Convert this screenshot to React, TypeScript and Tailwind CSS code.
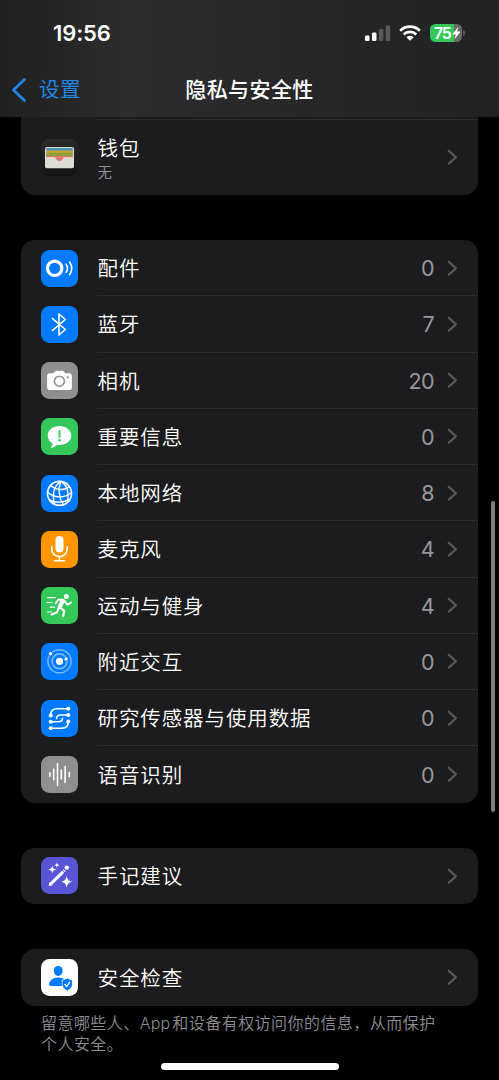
import React from "react"

const FONT = "font-['Inter','Noto_Sans_CJK_SC',sans-serif]"

const AccessoryIcon = () => (
    <svg viewBox="0 0 37 37" className="w-full h-full" fill="none" stroke="#fff" strokeLinecap="round">
        <circle cx="13.700" cy="18.300" r="7.200" strokeWidth="3.200" />
        <path d="M25 14.200a7 7 0 0 1 0 8.200" strokeWidth="1.600" />
        <path d="M28.600 12a11 11 0 0 1 0 12.600" strokeWidth="1.600" />
    </svg>
)

const BluetoothIcon = () => (
    <svg viewBox="0 0 37 37" className="w-full h-full" fill="none" stroke="#fff" strokeWidth="1.600" strokeLinecap="round" strokeLinejoin="round">
        <path d="M11.600 12.600 24.300 23.500 18 29V8l6.300 5.500L11.600 24.400" />
    </svg>
)

const CameraIcon = () => (
    <svg viewBox="0 0 37 37" className="w-full h-full">
        <path fill="#fff" d="M9 11.300h3.400l1.500-1.900c.4-.5.8-.7 1.500-.7h5.900c.7 0 1.100.2 1.500.7l1.500 1.900H28a2.900 2.900 0 0 1 2.900 2.900v11A2.900 2.900 0 0 1 28 28H9a2.900 2.900 0 0 1-2.900-2.800v-11A2.900 2.900 0 0 1 9 11.300Z" />
        <circle cx="18.400" cy="19.200" r="5" fill="none" stroke="#8e8e93" strokeWidth="1.600" />
        <circle cx="26.700" cy="15.300" r="1.100" fill="#8e8e93" />
    </svg>
)

const CriticalIcon = () => (
    <svg viewBox="0 0 37 37" className="w-full h-full">
        <path fill="#fff" d="M18.500 8C25 8 30.300 12.200 30.300 17.500S25 27 18.600 27c-1 0-1.700-.1-2.500-.3-1.400 1.500-3.700 2.900-5.600 3-.6 0-.7-.5-.4-.8.9-.9 1.500-2 1.500-3.300C8.800 23.800 6.700 21 6.700 17.500 6.700 12.200 12 8 18.500 8Z" />
        <path d="M18.500 12.900v6" stroke="#34c759" strokeWidth="1.900" strokeLinecap="round" />
        <circle cx="18.500" cy="22.300" r="1.200" fill="#34c759" />
    </svg>
)

const NetworkIcon = () => (
    <svg viewBox="0 0 37 37" className="w-full h-full" fill="none" stroke="#fff" strokeWidth="1.400" strokeLinecap="round">
        <circle cx="18.500" cy="18.400" r="12" strokeWidth="1.600" />
        <path d="M20 6.400C12.500 11 10.800 20 13.600 29.300M20 6.400c-3 6.500-2.500 16 2.300 23.300M20 6.400c6 4 8.500 11 6.300 21" />
        <path d="M9.600 10.600c5 4.300 12.700 5.600 18.300 1.300M6.700 17c6 6 16.300 6.800 23.500.8M8.600 24.800c5.700 3.300 13.800 3.300 19.300-.4" />
    </svg>
)

const MicIcon = () => (
    <svg viewBox="0 0 37 37" className="w-full h-full" fill="none" stroke="#fff" strokeWidth="1.600" strokeLinecap="round">
        <rect x="14.500" y="5" width="8" height="16.500" rx="4" fill="#fff" stroke="none" />
        <path d="M10.800 15.800v2.100c0 4.400 3.200 7.600 7.700 7.600s7.700-3.200 7.700-7.600v-2.100M18.500 25.500v4.200M13.400 29.800h10.200" />
    </svg>
)

const RunIcon = () => (
    <svg viewBox="0 0 37 37" className="w-full h-full" fill="none" stroke="#fff" strokeLinecap="round" strokeLinejoin="round">
        <circle cx="25.300" cy="9.500" r="2.500" fill="#fff" stroke="none" />
        <path d="m21.600 13.900-2.800 6" strokeWidth="4.200" />
        <path d="M21.700 12.800h-4.500l-2.600 3.600M23.200 13.600l3 4 3.900-2" strokeWidth="1.900" />
        <path d="m19.200 20.600 4.100 3.200-1.200 5.300M17.600 21.200l-1.800 4.200-5 2.200" strokeWidth="2.200" />
        <path d="M6.700 10.700h7.600M5.700 15.500h5.200M9.200 20.200h4.500M6.600 25h4" strokeWidth="1.200" />
    </svg>
)

const NearbyIcon = () => (
    <svg viewBox="0 0 37 37" className="w-full h-full" fill="none">
        <circle cx="18.500" cy="18.300" r="11.600" stroke="#7dbbff" strokeWidth="1.400" />
        <circle cx="18.500" cy="18.300" r="7.400" stroke="#7dbbff" strokeWidth="1.700" />
        <circle cx="18.500" cy="18.300" r="3.600" fill="#fff" />
        <circle cx="9.500" cy="10.800" r="2.400" fill="#007aff" />
        <circle cx="9.500" cy="10.800" r="1.700" fill="#fff" />
        <circle cx="25.100" cy="16" r="2.400" fill="#007aff" />
        <circle cx="25.100" cy="16" r="1.700" fill="#fff" />
    </svg>
)

const ResearchIcon = () => (
    <svg viewBox="0 0 37 37" className="w-full h-full" fill="none" stroke="#fff" strokeWidth="1.600" strokeLinecap="round">
        <path d="M27 8.700H16c-4 0-6.300 2.500-6.300 6.300" />
        <path d="M27 15h-7.200c-2.800 0-4.300 1-4.300 3.500M9.700 21.800h7.500c2.800 0 4.300-1 4.300-3.500" />
        <path d="M27.300 21.800c0 4-2.300 6.500-6.300 6.500H9.700" />
        <g fill="#fff" stroke="none">
            <circle cx="27.300" cy="8.700" r="2" />
            <circle cx="27.300" cy="15" r="2" />
            <circle cx="9.700" cy="15.400" r="2" />
            <circle cx="27.300" cy="21.400" r="2" />
            <circle cx="9.700" cy="21.800" r="2" />
            <circle cx="9.700" cy="28.300" r="2" />
        </g>
    </svg>
)

const SpeechIcon = () => (
    <svg viewBox="0 0 37 37" className="w-full h-full" stroke="#fff" strokeWidth="1.600" strokeLinecap="round">
        <path d="M8.900 16.700v3.600M12.700 13.200v10.600M16.500 7.500v22M20.300 14v9M24.100 10.500v16M28.300 16.200v4.600" />
    </svg>
)

const JournalIcon = () => (
    <svg viewBox="0 0 37 37" className="w-full h-full" fill="#fff">
        <path d="m9.600 27.100 11.700-11.500" stroke="#fff" strokeWidth="3" strokeLinecap="round" />
        <path d="m7.600 28.900 1-3.400 2.400 2.400Z" />
        <path d="m22.800 14.100.9-.9" stroke="#fff" strokeWidth="3" />
        <circle cx="25.800" cy="10.600" r="2.200" />
        <path d="M25.700 18.700c.7 4 1.900 5.300 5.900 6-4 .7-5.200 1.900-5.900 6-.7-4.100-1.900-5.300-5.900-6 4-.7 5.200-2 5.900-6ZM11.300 8.600c.5 2.700 1.300 3.500 4 4-2.700.5-3.500 1.300-4 4-.5-2.700-1.300-3.500-4-4 2.700-.5 3.500-1.300 4-4ZM15.900 5.600c.3 1.700.9 2.200 2.600 2.600-1.700.3-2.300.9-2.600 2.600-.3-1.700-.9-2.300-2.600-2.600 1.700-.4 2.300-.9 2.600-2.600Z" />
    </svg>
)

const SafetyIcon = () => (
    <svg viewBox="0 0 37 37" className="w-full h-full">
        <ellipse cx="17.200" cy="11.900" rx="4.400" ry="5" fill="#007aff" />
        <path d="M10 27c-1.200 0-2-.6-2-1.700 0-3.200 3.700-6.800 9.200-6.800 3.700 0 6 1.200 7.500 3v5.500H10Z" fill="#007aff" />
        <path d="m26.300 19.600 4.800 1.900v3.700c0 3-2 4.900-4.800 6.200-2.800-1.300-4.800-3.200-4.800-6.200v-3.700l4.800-1.900Z" fill="#007aff" stroke="#fff" strokeWidth="1.400" paintOrder="stroke" />
        <path d="m24 25.500 1.700 2 3-4.300" fill="none" stroke="#fff" strokeWidth="1.300" strokeLinecap="round" strokeLinejoin="round" />
    </svg>
)

const WalletIcon = () => (
    <svg viewBox="0 0 37 37" className="w-full h-full">
        <rect x="4" y="8" width="29" height="21.300" rx="2" fill="#dedbd4" />
        <path d="M5.200 9h26.600v3H5.200z" fill="#4695be" />
        <path d="M5.200 11.400h26.600v3.200H5.200z" fill="#c3a52e" />
        <path d="M5.200 13.800h26.600v4H5.200z" fill="#8da035" />
        <path d="M5.200 17h26.600v1.500H5.200z" fill="#df7466" />
        <path d="M4.600 18.300h27.800V28H4.600Z" fill="#dedbd4" />
        <path d="M12.500 18.300c1.700 0 2 .6 2.700 1.700.7 1.200 1.800 2 3.300 2s2.600-.8 3.300-2c.7-1.100 1-1.700 2.700-1.700Z" fill="#df7466" />
    </svg>
)

const Chevron = () => (
    <svg viewBox="0 0 12 18" className="w-3 h-[18px] shrink-0" fill="none" stroke="#5a5a5e" strokeWidth="2.200" strokeLinecap="round" strokeLinejoin="round">
        <path d="m2.700 2.700 7.200 6.500-7.200 6.500" />
    </svg>
)

const StatusBar = () => (
    <div className="flex items-center justify-between h-[66px] pl-[53px] pr-[34px]">
        <span className="text-[22px] leading-[26px] font-semibold tracking-[-0.1px] text-white">19:56</span>
        <div className="flex items-center">
            <svg viewBox="0 0 26 18" className="w-[26px] h-[18px]">
                <rect x="0" y="11.500" width="4.500" height="5.500" rx="1.200" fill="#fff" />
                <rect x="7" y="8.500" width="4.500" height="8.500" rx="1.200" fill="#fff" />
                <rect x="13.800" y="5" width="4.500" height="12" rx="1.200" fill="#5a5a5c" />
                <rect x="20.700" y="1.500" width="4.500" height="15.500" rx="1.200" fill="#5a5a5c" />
            </svg>
            <svg viewBox="0 0 22 16" className="ml-2 w-[22px] h-4" fill="none" stroke="#fff" strokeWidth="2.700">
                <path d="M1.200 5.700a14 14 0 0 1 19.600 0" />
                <path d="M4.700 9.500a9 9 0 0 1 12.600 0" />
                <path d="M11 15.800 7.400 12.200a5.100 5.100 0 0 1 7.200 0Z" fill="#fff" stroke="none" />
            </svg>
            <div className="ml-[9px] flex h-[18px] w-8 items-center rounded-[5.500px] bg-gradient-to-r from-[#34c759] from-75% to-[#6b6b6d] to-75%">
                <span className="pl-1 text-[16px] leading-[18px] font-semibold tracking-[-1.300px] text-white">75</span>
                <svg viewBox="0 0 8 14" className="ml-px w-[9px] h-[14px]" fill="#fff">
                    <path d="M5.800.8.300 7.700c-.3.400-.1.700.3.700h2.700L1.900 13.200l5.800-7c.3-.400.1-.700-.3-.700H4.600L5.800.8Z" />
                </svg>
            </div>
            <div className="ml-px h-[6px] w-[2px] rounded-r-full bg-[#5a5a5c]" />
        </div>
    </div>
)

const items = [
    { label: "配件", count: 0, bg: "bg-[#007aff]", Icon: AccessoryIcon },
    { label: "蓝牙", count: 7, bg: "bg-[#007aff]", Icon: BluetoothIcon },
    { label: "相机", count: 20, bg: "bg-[#8e8e93]", Icon: CameraIcon },
    { label: "重要信息", count: 0, bg: "bg-[#34c759]", Icon: CriticalIcon },
    { label: "本地网络", count: 8, bg: "bg-[#007aff]", Icon: NetworkIcon },
    { label: "麦克风", count: 4, bg: "bg-[#ff9500]", Icon: MicIcon },
    { label: "运动与健身", count: 4, bg: "bg-[#34c759]", Icon: RunIcon },
    { label: "附近交互", count: 0, bg: "bg-[#007aff]", Icon: NearbyIcon },
    { label: "研究传感器与使用数据", count: 0, bg: "bg-[#007aff]", Icon: ResearchIcon },
    { label: "语音识别", count: 0, bg: "bg-[#8e8e93]", Icon: SpeechIcon },
]

type RowProps = {
    label: string
    bg: string
    Icon: React.ComponentType
    count?: number
    divider?: boolean
}

function Row({ label, bg, Icon, count, divider }: RowProps) {
    return (
        <div className="flex h-[56.25px] items-center pl-5">
            <div className={`h-[37px] w-[37px] shrink-0 overflow-hidden rounded-[8.500px] ${bg}`}>
                <Icon />
            </div>
            <div className={`ml-[19px] flex h-full flex-1 items-center pr-5 ${divider ? "border-b border-[#2c2c2f]" : ""}`}>
                <span className="flex-1 pl-[0.500px] pt-[3px] text-[20.500px] leading-[30px] font-[350] tracking-[0.900px] text-white">{label}</span>
                {count !== undefined && (
                    <span className="mr-3 pt-px text-[21.500px] leading-[30px] tracking-[-0.600px] text-[#98989f]">{count}</span>
                )}
                <Chevron />
            </div>
        </div>
    )
}

export default function App() {
    return (
        <div className={`relative h-[1080px] w-[499px] overflow-hidden bg-black ${FONT}`}>
            <header className="h-[117px] bg-gradient-to-r from-[#202020] via-[#2b2c2d] via-25% to-[#222224]">
                <StatusBar />
                <div className="grid h-[47px] grid-cols-[1fr_auto_1fr] items-center">
                    <div className="flex items-center pl-[11px] text-[#2186e5]">
                        <svg viewBox="0 0 16 26" className="w-4 h-[26px]" fill="none" stroke="currentColor" strokeWidth="2.800" strokeLinecap="round" strokeLinejoin="round">
                            <path d="M13.500 2.500 2.500 13l11 10.500" />
                        </svg>
                        <span className="ml-3 pt-px text-[20.500px] leading-[30px] tracking-[0.600px]">设置</span>
                    </div>
                    <h1 className="text-[21px] leading-[30px] font-medium tracking-[0.400px] text-white">隐私与安全性</h1>
                </div>
            </header>

            <main className="px-[21px]">
                <div className="h-[77.500px] rounded-b-[14px] bg-[#1c1c1e] pl-5">
                    <div className="ml-14 h-[3px] border-b border-[#2c2c2f]" />
                    <div className="flex h-[74px] items-center">
                        <div className="h-[37px] w-[37px] shrink-0 rounded-[8.500px] bg-gradient-to-b from-[#2a2a2a] to-[#141414]">
                            <WalletIcon />
                        </div>
                        <div className="ml-[19.500px] flex flex-1 flex-col pt-[5px]">
                            <span className="text-[20.500px] leading-[26px] font-[350] tracking-[0.900px] text-white">钱包</span>
                            <span className="text-[14.500px] leading-[22px] text-[#8e8e93]">无</span>
                        </div>
                        <div className="pr-5">
                            <Chevron />
                        </div>
                    </div>
                </div>

                <div className="mt-[45.500px] overflow-hidden rounded-[14px] bg-[#1c1c1e]">
                    {items.map((item, i) => (
                        <Row key={item.label} {...item} divider={i < items.length - 1} />
                    ))}
                </div>

                <div className="mt-[45px] rounded-[14px] bg-[#1c1c1e]">
                    <Row label="手记建议" bg="bg-[#5856d6]" Icon={JournalIcon} />
                </div>

                <div className="mt-[45.500px] rounded-[14px] bg-[#1c1c1e]">
                    <Row label="安全检查" bg="bg-white" Icon={SafetyIcon} />
                </div>
                <p className="mt-[7px] pl-5 text-[16px] leading-[21.500px] font-[350] tracking-[0.450px] whitespace-nowrap text-[#8e8e93]">
                    留意哪些人、<span className="mr-[2px] tracking-[0.200px]">App</span>和设备有权访问你的信息，从而保护<br />个人安全。
                </p>
            </main>

            <div className="absolute right-[4px] top-[501px] h-[311px] w-[4px] rounded-full bg-[#7d7d7f]" />
            <div className="absolute bottom-[10.500px] left-[161px] h-[6.500px] w-[178px] rounded-full bg-white" />
        </div>
    )
}
